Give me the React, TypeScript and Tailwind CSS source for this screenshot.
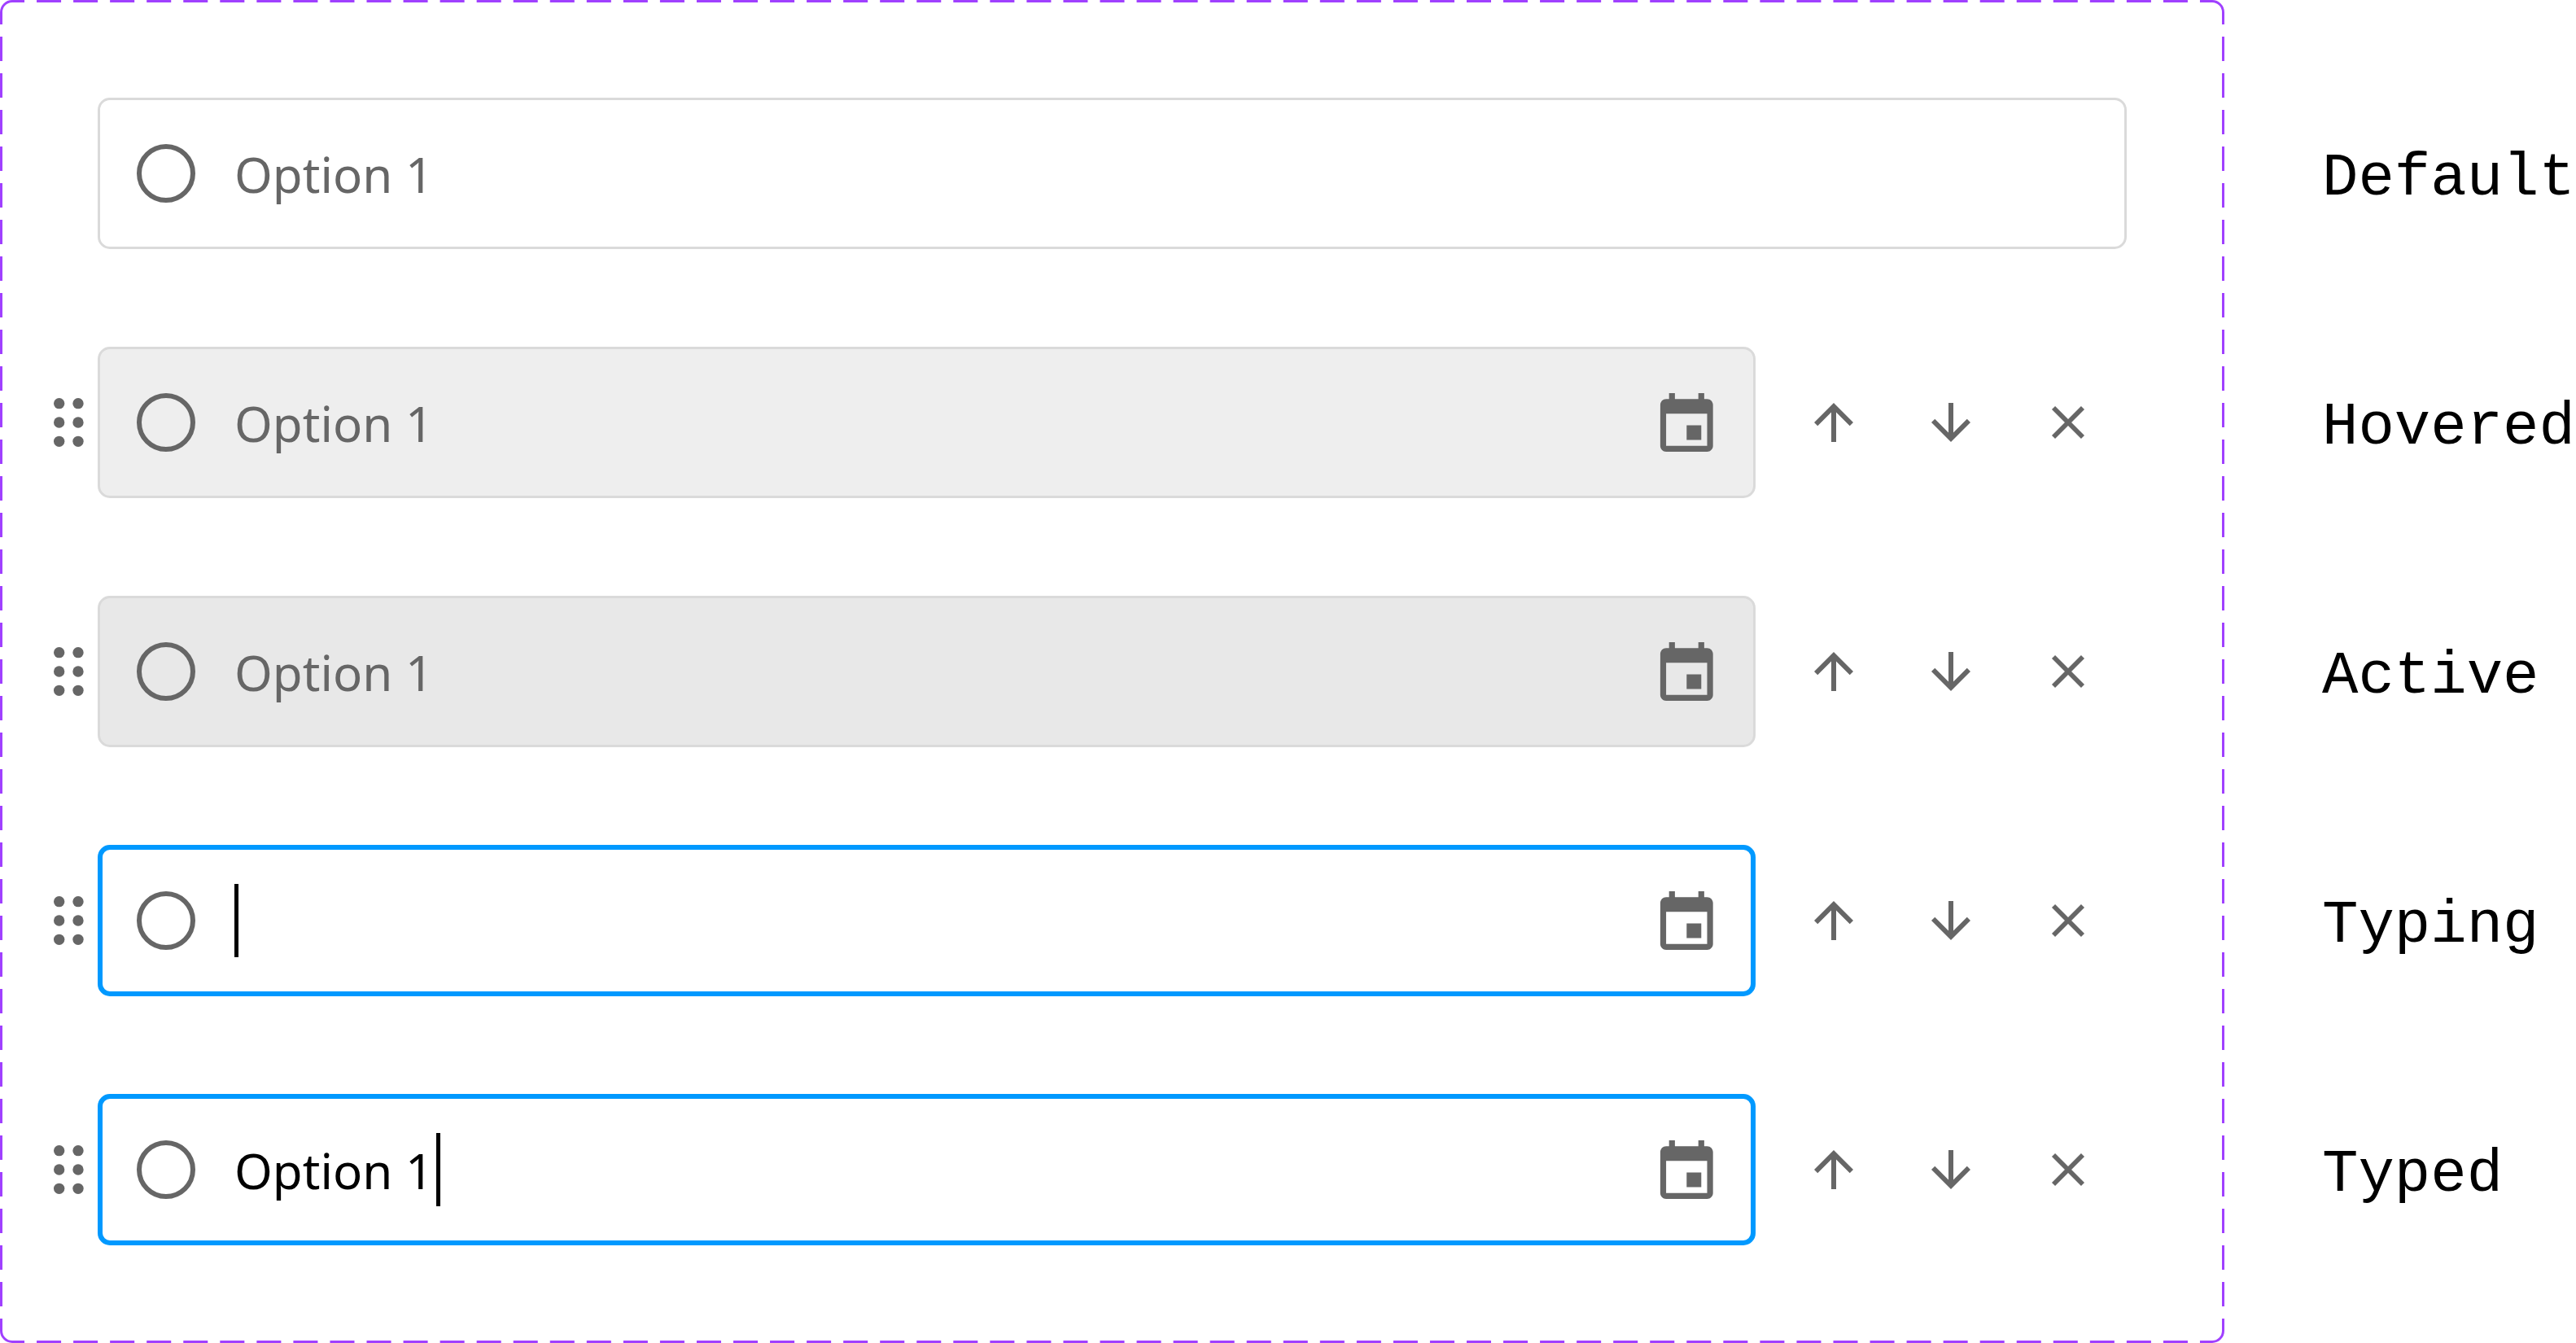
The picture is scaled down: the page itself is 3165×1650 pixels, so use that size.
type Variant = "default" | "hovered" | "active" | "typing" | "typed";

const SHELL: Record<Variant, string> = {
  default: "border-[3px] border-[#dadada] bg-white px-[45px]",
  hovered: "border-[3px] border-[#dadada] bg-[#eeeeee] px-[45px]",
  active: "border-[3px] border-[#dadada] bg-[#e8e8e8] px-[45px]",
  typing: "border-[6px] border-[#0099ff] bg-white px-[42px]",
  typed: "border-[6px] border-[#0099ff] bg-white px-[42px]",
};

const ROWS: { variant: Variant; label: string }[] = [
  { variant: "default", label: "Default" },
  { variant: "hovered", label: "Hovered" },
  { variant: "active", label: "Active" },
  { variant: "typing", label: "Typing" },
  { variant: "typed", label: "Typed" },
];

const FIELD =
  "h-[90px] border-0 bg-transparent px-0 pt-0.5 pb-0 text-[60px] leading-normal text-black outline-none placeholder:text-[#666666] placeholder:opacity-100";

/* Rounded outline whose gaps are laid out per side, so every corner stays solid. */
function DashedFrame() {
  const horizontal = { x1: "0", x2: "100%", pathLength: 2730 };
  const vertical = { y1: "0", y2: "100%", pathLength: 1650 };
  return (
    <svg
      aria-hidden="true"
      className="pointer-events-none absolute inset-0 h-full w-full text-[#a040ff]"
    >
      <rect
        x="1.5"
        y="1.5"
        rx="13.5"
        className="h-[calc(100%-3px)] w-[calc(100%-3px)]"
        fill="none"
        stroke="currentColor"
        strokeWidth="3"
      />
      <g stroke="white" strokeWidth="8" strokeDasharray="0 30 15 0">
        <line {...horizontal} y1="0" y2="0" />
        <line {...horizontal} y1="100%" y2="100%" />
        <line {...vertical} x1="0" x2="0" />
        <line {...vertical} x1="100%" x2="100%" />
      </g>
    </svg>
  );
}

function DragDots() {
  return (
    <svg viewBox="0 0 37 60" className="h-[60px] w-[37px]" fill="currentColor" aria-hidden="true">
      {[6.67, 30, 53.33].map((y) => (
        <g key={y}>
          <circle cx="6.67" cy={y} r="6.67" />
          <circle cx="30" cy={y} r="6.67" />
        </g>
      ))}
    </svg>
  );
}

function CalendarIcon() {
  return (
    <svg viewBox="2.2 1 20 20" className="size-[72px]" fill="currentColor" aria-hidden="true">
      <path d="M17 12h-5v5h5v-5zM16 1v2H8V1H6v2H5c-1.11 0-1.99.9-1.99 2L3 19c0 1.1.89 2 2 2h14c1.1 0 2-.9 2-2V5c0-1.1-.9-2-2-2h-1V1h-2zm3 18H5V8h14v11z" />
    </svg>
  );
}

const ACTIONS = [
  { name: "Move up", d: "M4 12l1.41 1.41L11 7.83V20h2V7.83l5.58 5.59L20 12l-8-8-8 8z" },
  { name: "Move down", d: "M20 12l-1.41-1.41L13 16.17V4h-2v12.17l-5.58-5.59L4 12l8 8 8-8z" },
  {
    name: "Remove",
    d: "M18.67 6.68L17.32 5.33 12 10.65 6.68 5.33 5.33 6.68 10.65 12 5.33 17.32 6.68 18.67 12 13.35 17.32 18.67 18.67 17.32 13.35 12z",
  },
];

function Caret() {
  return <span aria-hidden="true" className="h-[90px] w-[5px] shrink-0 bg-black" />;
}

function OptionField({ variant, label }: { variant: Variant; label: string }) {
  const editable = variant !== "default";
  const fieldLabel = `${label} option text`;
  return (
    <div
      className={`flex h-[186px] min-w-0 flex-1 items-center rounded-[15px] ${SHELL[variant]}`}
    >
      <input
        type="radio"
        aria-label={`${label} option`}
        className="mr-12 size-[72px] shrink-0 appearance-none rounded-full border-[6px] border-[#666666]"
      />
      {variant === "typing" && <Caret />}
      {variant === "typed" ? (
        <div className="flex flex-1 items-center gap-1">
          <input
            type="text"
            aria-label={fieldLabel}
            defaultValue="Option 1"
            className={`field-sizing-content ${FIELD}`}
          />
          <Caret />
        </div>
      ) : (
        <input
          type="text"
          aria-label={fieldLabel}
          placeholder={variant === "typing" ? "" : "Option 1"}
          className={`min-w-0 flex-1 ${FIELD}`}
        />
      )}
      {editable && (
        <button type="button" aria-label="Pick a date" className="shrink-0">
          <CalendarIcon />
        </button>
      )}
    </div>
  );
}

function OptionRow({ variant, label }: { variant: Variant; label: string }) {
  const editable = variant !== "default";
  return (
    <div className="flex items-center pr-[120px]">
      <div className="flex w-[120px] shrink-0 justify-end pr-[17px]">
        {editable && (
          <button type="button" aria-label="Drag to reorder">
            <DragDots />
          </button>
        )}
      </div>
      <OptionField variant={variant} label={label} />
      {editable && (
        <div className="flex shrink-0 items-center gap-[72px] pr-9 pl-[60px]">
          {ACTIONS.map(({ name, d }) => (
            <button key={name} type="button" aria-label={name}>
              <svg viewBox="0 0 24 24" className="size-[72px]" fill="currentColor" aria-hidden="true">
                <path d={d} />
              </svg>
            </button>
          ))}
        </div>
      )}
    </div>
  );
}

export default function App() {
  return (
    <main className="flex min-h-screen items-start gap-[120px] overflow-x-hidden bg-white font-['Noto_Sans',sans-serif]">
      <section className="relative flex min-w-0 flex-1 flex-col gap-[120px] py-[120px] text-[#666666]">
        <DashedFrame />
        {ROWS.map((row) => (
          <OptionRow key={row.variant} {...row} />
        ))}
      </section>
      <ul className="flex w-[312px] shrink-0 flex-col gap-[120px] py-[120px] font-['Liberation_Mono',monospace] text-[74px] text-black">
        {ROWS.map(({ variant, label }) => (
          <li key={variant} className="flex h-[186px] items-center pt-3 whitespace-nowrap">
            {label}
          </li>
        ))}
      </ul>
    </main>
  );
}
